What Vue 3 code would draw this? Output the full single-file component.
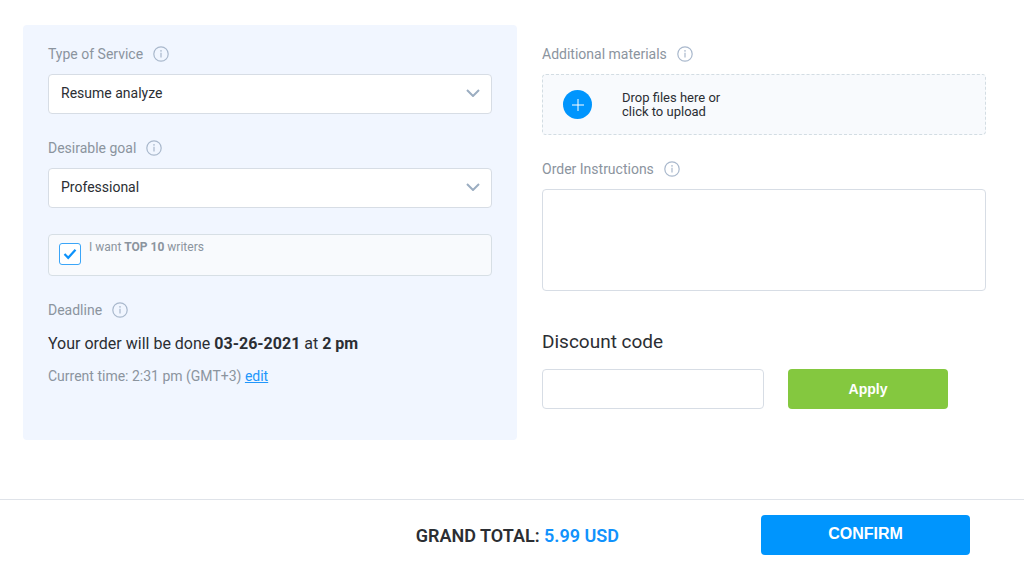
<template>
  <form class="order" @submit.prevent>
    <svg class="sprite" aria-hidden="true">
      <symbol id="info" viewBox="0 0 16 16">
        <circle cx="8" cy="8" r="7.2" fill="none" stroke="currentColor" stroke-width="1.2" />
        <path d="M8 6.8V11.6" fill="none" stroke="currentColor" stroke-width="1.2" />
        <circle cx="8" cy="4.9" r="0.8" fill="currentColor" />
      </symbol>
    </svg>

    <div class="columns">
      <section class="column panel">
        <template v-for="field in fields" :key="field.id">
          <div class="caption">
            <label :for="field.id">{{ field.label }}</label>
            <svg class="info"><use href="#info" /></svg>
          </div>
          <div class="select">
            <select :id="field.id" v-model="field.value">
              <option v-for="option in field.options" :key="option">{{ option }}</option>
            </select>
            <svg class="chevron" viewBox="0 0 14 8">
              <path d="M1 1L7 7L13 1" />
            </svg>
          </div>
        </template>

        <label class="top-writers">
          <span class="check">
            <input v-model="topWriters" type="checkbox" />
            <svg v-if="topWriters" viewBox="0 0 14 12">
              <path d="M1.5 6L5.2 9.8L12.5 1.8" />
            </svg>
          </span>
          <span>I want <b>TOP 10</b> writers</span>
        </label>

        <div class="caption">
          <span>Deadline</span>
          <svg class="info"><use href="#info" /></svg>
        </div>
        <p class="deadline">Your order will be done <b>03-26-2021</b> at <b>2 pm</b></p>
        <p class="current">Current time: 2:31 pm (GMT+3) <a href="#">edit</a></p>
      </section>

      <section class="column">
        <div class="caption">
          <label for="files">Additional materials</label>
          <svg class="info"><use href="#info" /></svg>
        </div>
        <label class="drop">
          <input id="files" class="file" type="file" multiple />
          <span class="plus">
            <svg viewBox="0 0 12 12"><path d="M6 0V12M0 6H12" /></svg>
          </span>
          <span>Drop files here or<br />click to upload</span>
        </label>

        <div class="caption">
          <label for="instructions">Order Instructions</label>
          <svg class="info"><use href="#info" /></svg>
        </div>
        <textarea id="instructions" v-model="instructions"></textarea>

        <label class="discount-title" for="code">Discount code</label>
        <div class="discount">
          <input id="code" v-model="code" type="text" />
          <button type="button">Apply</button>
        </div>
      </section>
    </div>

    <footer class="footer">
      <p class="total">GRAND TOTAL: <span>5.99 USD</span></p>
      <button type="submit">CONFIRM</button>
    </footer>
  </form>
</template>

<script setup>
import { ref } from "vue";

const fields = ref([
  {
    id: "service",
    label: "Type of Service",
    value: "Resume analyze",
    options: ["Resume analyze"],
  },
  {
    id: "goal",
    label: "Desirable goal",
    value: "Professional",
    options: ["Professional"],
  },
]);

const topWriters = ref(true);
const instructions = ref("");
const code = ref("");
</script>

<style>
body {
  background: #fff;
}
</style>

<style scoped>
* {
  box-sizing: border-box;
}
.order {
  min-height: 100vh;
  display: flex;
  flex-direction: column;
  font-family: Roboto, "Liberation Sans", sans-serif;
  font-size: 14px;
  color: #2b2e33;
}
.sprite {
  position: absolute;
  width: 0;
  height: 0;
}
.columns {
  flex: 1;
  display: grid;
  grid-template-columns: 1fr 1fr;
  align-items: start;
  padding: 25px 13px 24px 23px;
}
.column {
  padding: 19px 25px 30px;
}
.panel {
  padding-bottom: 54px;
  background: #f1f6ff;
  border-radius: 4px;
}
.caption {
  display: flex;
  align-items: center;
  gap: 10px;
  height: 20px;
  margin-bottom: 10px;
  color: #8b949e;
}
.info {
  width: 16px;
  height: 16px;
  color: #a9b8cc;
}
.select {
  display: grid;
  align-items: center;
  margin-bottom: 24px;
}
.select > * {
  grid-area: 1 / 1;
}
select,
textarea,
.discount input {
  width: 100%;
  height: 40px;
  padding: 0 12px;
  border: 1px solid #d7dde5;
  border-radius: 4px;
  background: #fff;
  font: inherit;
  color: inherit;
  appearance: none;
}
select {
  padding-bottom: 2px;
}
.chevron {
  justify-self: end;
  width: 14px;
  height: 8px;
  margin: 0 12px 2px 0;
  pointer-events: none;
}
.chevron path {
  fill: none;
  stroke: #9badc1;
  stroke-width: 2;
}
.top-writers {
  display: flex;
  gap: 8px;
  height: 42px;
  margin: 26px 0 24px;
  padding: 4px 10px 6px;
  border: 1px solid #d7dfe5;
  border-radius: 4px;
  background: #f8fafd;
  font-size: 12px;
  line-height: 16px;
  color: #8b949e;
}
.check {
  display: grid;
  place-items: center;
  align-self: center;
}
.check > * {
  grid-area: 1 / 1;
}
.check input {
  width: 22px;
  height: 22px;
  margin: 0;
  border: 1px solid #3aa5f8;
  border-radius: 3px;
  background: #fff;
  appearance: none;
}
.check svg {
  width: 14px;
  height: 12px;
  pointer-events: none;
}
.check path {
  fill: none;
  stroke: #0d92fb;
  stroke-width: 2.2;
}
.deadline {
  margin: 12px 0 10px;
  font-size: 16px;
  line-height: 24px;
}
.current {
  margin: 0;
  line-height: 20px;
  color: #8b949e;
}
.current a {
  color: #2196fb;
}
.drop {
  display: flex;
  align-items: center;
  gap: 30px;
  height: 61px;
  margin-bottom: 24px;
  padding: 0 20px;
  border: 1px dashed #d3dde3;
  border-radius: 4px;
  background: #f8fafd;
  font-size: 13px;
  line-height: 14px;
}
.file {
  position: absolute;
  width: 1px;
  height: 1px;
  opacity: 0;
}
.plus {
  display: grid;
  place-items: center;
  width: 29px;
  height: 29px;
  border-radius: 50%;
  background: #0095fd;
}
.plus svg {
  width: 12px;
  height: 12px;
}
.plus path {
  stroke: #fff;
}
textarea {
  display: block;
  height: 102px;
  padding: 12px;
  resize: none;
}
.discount-title {
  display: block;
  margin: 39px 0 15px;
  font-size: 19px;
  line-height: 24px;
}
.discount {
  display: grid;
  grid-template-columns: 1fr 160px;
  gap: 24px;
  margin-right: 38px;
}
button {
  height: 40px;
  border: 0;
  border-radius: 4px;
  font-family: "Liberation Sans", sans-serif;
  font-weight: bold;
  color: #fff;
}
.discount button {
  background: #84c83f;
  font-size: 14px;
}
.footer {
  display: flex;
  align-items: center;
  justify-content: flex-end;
  gap: 142px;
  padding: 15px 54px 9px;
  border-top: 1px solid #dfe3e9;
}
.total {
  margin: 0;
  font-size: 18px;
  font-weight: 600;
}
.total span {
  color: #1192fc;
}
.footer button {
  width: 209px;
  padding-bottom: 3px;
  background: #0095fd;
  font-size: 16px;
}
</style>
